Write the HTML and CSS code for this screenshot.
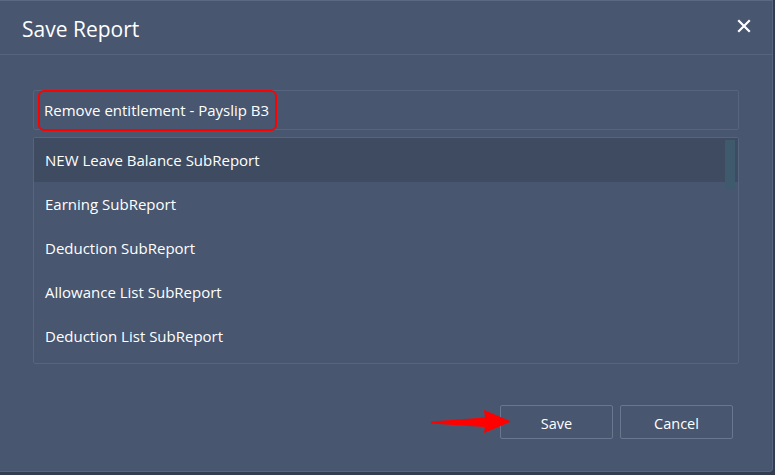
FILE: index.html
```html
<!DOCTYPE html>
<html>
<head>
<meta charset="utf-8">
<link rel="stylesheet" href="styles.css">
</head>
<body>
<div class="dialog">
  <div class="header">
    <span class="title">Save Report</span>
    <span class="close">
      <svg width="14" height="14" viewBox="0 0 14 14"><path d="M2 2 L12 12 M12 2 L2 12" stroke="#ffffff" stroke-width="2.2" stroke-linecap="square"/></svg>
    </span>
  </div>
  <div class="body">
    <div class="input">
      <span class="highlight">Remove entitlement - Payslip B3</span>
    </div>
    <div class="list">
      <div class="row selected">NEW Leave Balance SubReport</div>
      <div class="row">Earning SubReport</div>
      <div class="row">Deduction SubReport</div>
      <div class="row">Allowance List SubReport</div>
      <div class="row">Deduction List SubReport</div>
      <div class="thumb"></div>
    </div>
  </div>
  <div class="footer">
    <div class="btn-wrap">
      <svg class="arrow" width="82" height="26" viewBox="0 0 82 26"><path d="M0 11.5 L54 7.5 L53 0 L80 11.5 L53 23 L54 17 L0 13.5 Z" fill="#ff0000"/></svg>
      <button class="btn">Save</button>
    </div>
    <button class="btn">Cancel</button>
  </div>
</div>
</body>
</html>
```
FILE: styles.css
```css
* { box-sizing: border-box; }
html, body { margin: 0; padding: 0; }
body {
  background: #323d50;
  width: 775px;
  height: 475px;
  font-family: "Open Sans", "Noto Sans", sans-serif;
  color: #ffffff;
  overflow: hidden;
}
.dialog {
  width: 773px;
  height: 472px;
  background: #48566f;
  border: 1px solid #56657d;
  border-left: none;
  border-top-color: #5a6880;
  border-radius: 0 0 4px 0;
  display: flex;
  flex-direction: column;
}
.header {
  height: 54px;
  border-bottom: 1px solid #56647c;
  display: flex;
  align-items: center;
  justify-content: space-between;
  padding: 0 22px 0 22px;
}
.title {
  font-size: 21px;
  margin-top: 2px;
}
.close { display: flex; margin-top: -3px; margin-right: -1px; }
.body {
  padding: 35px 33px 0 33px;
}
.input {
  width: 706px;
  height: 40px;
  border: 1px solid #56657d;
  border-radius: 2px;
  display: flex;
  align-items: center;
  padding-left: 4px;
}
.highlight {
  border: 2px solid #ff0000;
  border-radius: 6px;
  height: 41px;
  display: flex;
  align-items: center;
  padding: 0 6px 0 4px;
  font-size: 15px;
}
.list {
  position: relative;
  margin-top: 7px;
  width: 706px;
  height: 227px;
  border: 1px solid #56657d;
  border-radius: 2px;
}
.row {
  height: 44px;
  display: flex;
  align-items: center;
  padding-left: 11px;
  font-size: 15px;
}
.row.selected { background: #3e4b61; }
.thumb {
  position: absolute;
  top: 2px;
  right: 3px;
  width: 10px;
  height: 50px;
  background: #405a6d;
}
.footer {
  display: flex;
  justify-content: flex-end;
  align-items: flex-start;
  gap: 7px;
  padding: 41px 39px 0 0;
}
.btn-wrap { position: relative; }
.arrow {
  position: absolute;
  left: -69px;
  top: 5px;
}
.btn {
  width: 113px;
  height: 34px;
  background: transparent;
  border: 1px solid #6a788f;
  border-radius: 2px;
  color: #ffffff;
  font-family: "Open Sans", "Noto Sans", sans-serif;
  font-size: 14.5px;
  padding: 3px 0 0 0;
}
```
